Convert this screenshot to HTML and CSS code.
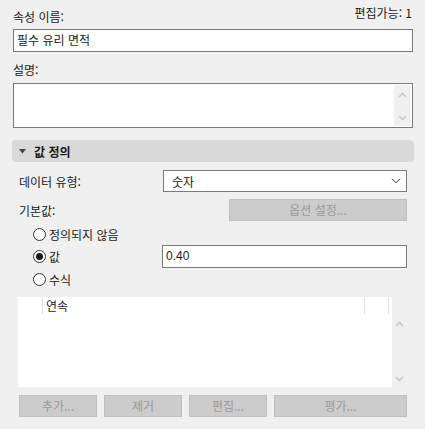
FILE: index.html
```html
<!DOCTYPE html>
<html lang="ko">
<head>
<meta charset="utf-8">
<link rel="stylesheet" href="styles.css">
</head>
<body>
<div class="panel">
  <div class="row-top">
    <span class="label">속성 이름:</span>
    <span class="editable">편집가능: 1</span>
  </div>
  <div class="textbox name">필수 유리 면적</div>
  <div class="label desc-label">설명:</div>
  <div class="textarea">
    <div class="vscroll">
      <svg width="9" height="6" viewBox="0 0 9 6"><path d="M1 5 L4.5 1.5 L8 5" fill="none" stroke="#c8c8c8" stroke-width="1.6"/></svg>
      <svg width="9" height="6" viewBox="0 0 9 6"><path d="M1 1 L4.5 4.5 L8 1" fill="none" stroke="#c8c8c8" stroke-width="1.6"/></svg>
    </div>
  </div>

  <div class="section">
    <svg class="tri" width="7" height="5" viewBox="0 0 7 5"><path d="M0 0 H7 L3.5 4.5 Z" fill="#444"/></svg>
    <span>값 정의</span>
  </div>

  <div class="grid-row r1">
    <span class="label">데이터 유형:</span>
    <div class="select">
      <span>숫자</span>
      <svg width="10" height="6" viewBox="0 0 10 6"><path d="M1 0.8 L5 4.8 L9 0.8" fill="none" stroke="#333" stroke-width="1"/></svg>
    </div>
  </div>
  <div class="grid-row r2">
    <span class="label">기본값:</span>
    <div class="btn opt">옵션 설정...</div>
  </div>
  <div class="radio-row r3">
    <span class="radio"></span><span class="rlabel">정의되지 않음</span>
  </div>
  <div class="radio-row r4">
    <span class="radio on"></span><span class="rlabel">값</span>
    <div class="textbox val">0.40</div>
  </div>
  <div class="radio-row r5">
    <span class="radio"></span><span class="rlabel">수식</span>
  </div>

  <div class="listwrap">
    <div class="list">
      <div class="lhead">
        <div class="c0"></div>
        <div class="c1">연속</div>
        <div class="c2"></div>
      </div>
    </div>
    <div class="lscroll">
      <svg width="9" height="6" viewBox="0 0 9 6"><path d="M1 5 L4.5 1.5 L8 5" fill="none" stroke="#c8c8c8" stroke-width="1.6"/></svg>
      <svg width="9" height="6" viewBox="0 0 9 6"><path d="M1 1 L4.5 4.5 L8 1" fill="none" stroke="#c8c8c8" stroke-width="1.6"/></svg>
    </div>
  </div>

  <div class="buttons">
    <div class="btn b1">추가...</div>
    <div class="btn b2">제거</div>
    <div class="btn b3">편집...</div>
    <div class="btn b4">평가...</div>
  </div>
</div>
</body>
</html>
```
FILE: styles.css
```css
html, body {
  margin: 0;
  padding: 0;
  background: #f0f0f0;
}
body {
  width: 425px;
  height: 429px;
  overflow: hidden;
  font-family: "Noto Sans CJK KR", "Noto Sans", sans-serif;
  font-size: 12px;
  color: #1a1a1a;
}
.panel {
  padding: 0 12px 0 13px;
  display: flex;
  flex-direction: column;
}
.row-top {
  display: flex;
  justify-content: space-between;
  align-items: flex-start;
  height: 29px;
  line-height: 17px;
}
.row-top .label { padding-top: 8px; }
.editable { padding-top: 4px; margin-right: 1px; }
.label { line-height: 17px; }
.textbox {
  box-sizing: border-box;
  background: #fff;
  border: 1px solid #7a7a7a;
  height: 23px;
  line-height: 20px;
  padding-left: 3px;
}
.name { width: 400px; }
.desc-label {
  margin-top: 6px;
  height: 25px;
  line-height: 17px;
  padding-top: 3px;
  box-sizing: border-box;
}
.textarea {
  box-sizing: border-box;
  width: 400px;
  height: 45px;
  background: #fff;
  border: 1px solid #7a7a7a;
  display: flex;
  justify-content: flex-end;
}
.vscroll {
  width: 17px;
  margin: 1px;
  background: #f0f0f0;
  display: flex;
  flex-direction: column;
  justify-content: space-between;
  align-items: center;
  padding: 7px 0 5px;
  box-sizing: border-box;
}
.section {
  margin-top: 12px;
  margin-left: -1px;
  width: 402px;
  height: 22px;
  box-sizing: border-box;
  background: #d9d9d9;
  border-radius: 4px;
  display: flex;
  align-items: center;
  font-weight: bold;
  padding-left: 7px;
}
.tri { margin-right: 8px; margin-top: 1px; }
.grid-row {
  box-sizing: border-box;
  display: flex;
  justify-content: space-between;
  align-items: center;
  padding-left: 6px;
  width: 394px;
}
.r1 { margin-top: 8px; height: 22px; }
.select {
  box-sizing: border-box;
  width: 244px;
  height: 22px;
  background: #fff;
  border: 1px solid #7a7a7a;
  display: flex;
  justify-content: space-between;
  align-items: center;
  padding: 0 5px 0 8px;
}
.r2 { margin-top: 7px; height: 22px; }
.btn {
  box-sizing: border-box;
  height: 22px;
  background: #cccccc;
  border: 1px solid #bfbfbf;
  color: #9a9a9a;
  text-align: center;
  line-height: 20px;
}
.opt { width: 178px; }
.radio-row {
  display: flex;
  align-items: center;
  padding-left: 20px;
  height: 22px;
}
.r3 { margin-top: 2px; }
.r4 { margin-top: 0; }
.r5 { margin-top: 1px; }
.radio {
  box-sizing: border-box;
  width: 13px;
  height: 13px;
  border-radius: 50%;
  border: 1px solid #333;
  background: #fff;
  margin-right: 3px;
  position: relative;
}
.radio.on::after {
  content: "";
  position: absolute;
  left: 2px;
  top: 2px;
  width: 7px;
  height: 7px;
  border-radius: 50%;
  background: #1a1a1a;
}
.val {
  width: 245px;
  height: 23px;
  margin-left: auto;
  margin-right: 6px;
  font-family: "Liberation Sans", "Noto Sans", sans-serif;
  line-height: 21px;
}
.listwrap {
  margin-top: 7px;
  margin-left: 5px;
  display: flex;
  height: 90px;
}
.list {
  width: 374px;
  background: #fff;
}
.lhead {
  display: flex;
  height: 17px;
  line-height: 17px;
}
.c0 { width: 24px; flex: none; }
.c1 { width: 318px; flex: none; border-left: 1px solid #e3e3e3; padding-left: 3px; border-right: 1px solid #e3e3e3; }
.c2 { width: 23px; flex: none; border-right: 1px solid #e3e3e3; }
.lscroll {
  width: 15px;
  display: flex;
  flex-direction: column;
  justify-content: space-between;
  align-items: center;
  padding: 24px 0 5px;
  box-sizing: border-box;
}
.buttons {
  display: flex;
  margin-top: 8px;
  margin-left: 6px;
  gap: 7px;
}
.b1, .b2, .b3 { width: 78px; }
.b4 { width: 133px; }
```
